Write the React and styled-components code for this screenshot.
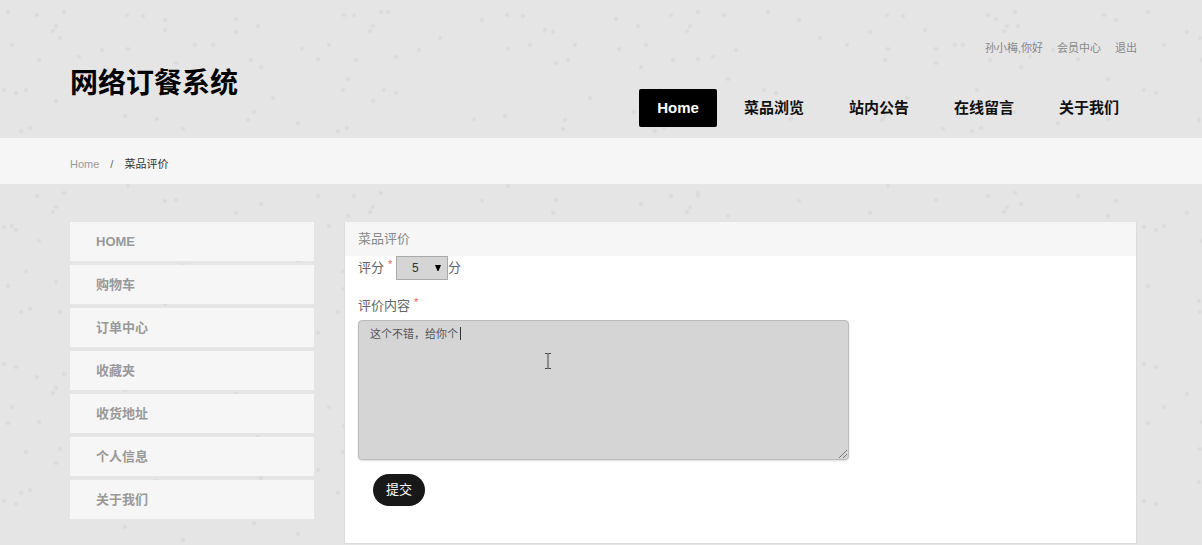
import { useState } from "react";
import styled, { createGlobalStyle } from "styled-components";

const navItems = ["Home", "菜品浏览", "站内公告", "在线留言", "关于我们"];
const userLinks = ["孙小梅,你好", "会员中心", "退出"];
const sideItems = ["HOME", "购物车", "订单中心", "收藏夹", "收货地址", "个人信息", "关于我们"];

// paper grain: two tiles of faint dots whose sizes differ, so the repeat is not seen
const grainDots = [
  [8, 12], [64, 12], [143, 16], [165, 20], [127, 15], [56, 26], [165, 30], [12, 45],
  [60, 38], [102, 50], [128, 49], [79, 57], [176, 63], [251, 60], [261, 67], [302, 49],
  [318, 59], [356, 60], [348, 79], [273, 98], [254, 112], [157, 119], [125, 116], [56, 101],
  [16, 93], [26, 90], [4, 90], [30, 128], [183, 129], [248, 120], [298, 123], [338, 131],
  [344, 15], [354, 15], [236, 19], [236, 32], [258, 26], [370, 31], [195, 45], [213, 45],
];

const grainTiles = [[380, 137], [317, 181]];

const grain = grainDots
  .map(([x, y], i) => {
    const [w, h] = grainTiles[i % 2];
    return `radial-gradient(circle at ${x % w}px ${y}px, #dbdbdb 1px, transparent 3px) 0 0 / ${w}px ${h}px`;
  })
  .join(", ");

const App = () => {
  const [score, setScore] = useState("5");
  const [content, setContent] = useState("这个不错，给你个");

  return (
    <>
      <GlobalStyle />
      <Header>
        <Logo>网络订餐系统</Logo>
        <HeaderRight>
          <UserLinks>
            {userLinks.map((text) => (
              <a href="#" key={text}>{text}</a>
            ))}
          </UserLinks>
          <Nav>
            {navItems.map((text, i) => (
              <NavLink href="#" key={text} $active={i === 0}>{text}</NavLink>
            ))}
          </Nav>
        </HeaderRight>
      </Header>
      <Breadcrumb>
        <a href="#">Home</a>
        <span>/</span>
        <strong>菜品评价</strong>
      </Breadcrumb>
      <Content>
        <SideMenu>
          {sideItems.map((text) => (
            <SideLink href="#" key={text}>{text}</SideLink>
          ))}
        </SideMenu>
        <Panel>
          <PanelTitle>菜品评价</PanelTitle>
          <Form onSubmit={(e) => e.preventDefault()}>
            <ScoreRow>
              <Label htmlFor="score">评分<Required>*</Required></Label>
              <SelectBox>
                <Select id="score" value={score} onChange={(e) => setScore(e.target.value)}>
                  {["5", "4", "3", "2", "1"].map((n) => (
                    <option key={n}>{n}</option>
                  ))}
                </Select>
                <Arrow viewBox="0 0 6 6"><path d="M0 0h6L3.5 6h-1z" /></Arrow>
              </SelectBox>
              <span>分</span>
            </ScoreRow>
            <Label htmlFor="content">评价内容<Required>*</Required></Label>
            <TextBox>
              <TextArea id="content" value={content} onChange={(e) => setContent(e.target.value)} />
              <Caret />
              <Pointer viewBox="0 0 8 16">
                <path d="M1 .5h2.5l.5.5.5-.5H7M4 1v14M1 15.5h2.5L4 15l.5.5H7" />
              </Pointer>
              <Grip viewBox="0 0 10 10">
                <path d="M1 9l8-8M5 9l4-4" />
              </Grip>
            </TextBox>
            <SubmitButton type="submit">提交</SubmitButton>
          </Form>
        </Panel>
      </Content>
    </>
  );
};

const GlobalStyle = createGlobalStyle`
  * {
    box-sizing: border-box;
  }

  body {
    margin: 0;
    color: #666;
    font: 13px/20px "Liberation Sans", "Noto Sans CJK SC", sans-serif;
    background: ${grain}, #e5e5e5;
  }

  a {
    color: inherit;
    text-decoration: none;
  }
`;

const Header = styled.header`
  display: flex;
  justify-content: space-between;
  height: 138px;
  padding: 38px 65px 0 70px;
`;

const Logo = styled.h1`
  margin: 26px 0 0;
  font-size: 28px;
  line-height: 40px;
  font-weight: 700;
  color: #000;
`;

const HeaderRight = styled.div`
  display: flex;
  flex-direction: column;
  align-items: flex-end;
  gap: 31px;
`;

const UserLinks = styled.div`
  display: flex;
  gap: 14px;
  font-size: 11px;
  color: #888;
`;

const Nav = styled.nav`
  display: flex;
  gap: 9px;
`;

const NavLink = styled.a`
  padding: 0 18px;
  border-radius: 2px;
  font-size: 15px;
  line-height: 38px;
  font-weight: 700;
  color: ${({ $active }) => ($active ? "#fff" : "#111")};
  background: ${({ $active }) => ($active ? "#000" : "transparent")};
`;

const Breadcrumb = styled.nav`
  display: flex;
  align-items: center;
  gap: 11px;
  height: 46px;
  padding: 6px 65px 0 70px;
  font-size: 11px;
  background: #f6f6f6;

  a {
    color: #999;
  }
  strong {
    font-weight: 400;
    color: #333;
  }
`;

const Content = styled.main`
  display: flex;
  align-items: flex-start;
  gap: 30px;
  padding: 38px 65px 0 70px;
`;

const SideMenu = styled.nav`
  display: flex;
  flex: 0 0 244px;
  flex-direction: column;
  gap: 4px;
`;

const SideLink = styled.a`
  padding: 0 26px;
  font-weight: 700;
  line-height: 39px;
  color: #999;
  background: #f6f6f6;
`;

const Panel = styled.section`
  flex: 1;
  min-width: 0;
  border: solid #dcdcdc;
  border-width: 0 1px 1px;
  background: #fff;
`;

const PanelTitle = styled.h2`
  margin: 0;
  padding: 0 13px;
  font-size: 13px;
  line-height: 34px;
  font-weight: 400;
  color: #888;
  background: #f6f6f6;
`;

const Form = styled.form`
  padding: 0 13px 37px;
`;

const ScoreRow = styled.div`
  display: flex;
  align-items: center;
  height: 24px;
  margin-bottom: 14px;
`;

const Label = styled.label`
  display: flex;
  line-height: 24px;
`;

const Required = styled.span`
  width: 12px;
  padding-left: 4px;
  font-size: 11px;
  line-height: 16px;
  color: #f06050;
`;

const SelectBox = styled.span`
  position: relative;
`;

const Select = styled.select`
  display: block;
  width: 52px;
  height: 24px;
  padding: 0 15px;
  border: 1px solid #aaa;
  border-radius: 0;
  appearance: none;
  font: inherit;
  font-size: 12px;
  color: #333;
  background: #d5d5d5;
`;

const Arrow = styled.svg`
  position: absolute;
  top: 9px;
  right: 7px;
  width: 6px;
  height: 6px;
  pointer-events: none;
`;

const TextBox = styled.div`
  position: relative;
  max-width: 491px;
  margin: 2px 0 14px;
`;

const TextArea = styled.textarea`
  display: block;
  width: 100%;
  height: 140px;
  padding: 3px 11px;
  border: 1px solid #bbb;
  border-radius: 4px;
  outline: none;
  resize: none;
  font: inherit;
  font-size: 11px;
  color: #555;
  background: #d5d5d5;
  box-shadow: 0 1px 2px #ddd;
`;

const Caret = styled.span`
  position: absolute;
  top: 7px;
  left: 102px;
  width: 1px;
  height: 13px;
  background: #333;
`;

const Pointer = styled.svg`
  position: absolute;
  top: 33px;
  left: 186px;
  width: 8px;
  height: 16px;
  fill: none;
  stroke: #444;
  pointer-events: none;
`;

const Grip = styled.svg`
  position: absolute;
  right: 1px;
  bottom: 1px;
  width: 10px;
  height: 10px;
  fill: none;
  stroke: #777;
  pointer-events: none;
`;

const SubmitButton = styled.button`
  display: block;
  width: 52px;
  height: 32px;
  margin-left: 15px;
  padding: 0;
  border: 0;
  border-radius: 16px;
  font: inherit;
  color: #fff;
  background: #181818;
`;

export default App;
